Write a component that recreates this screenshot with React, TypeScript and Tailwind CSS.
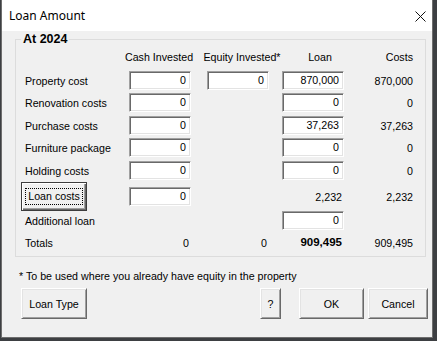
import type { ReactNode } from 'react'

interface Row {
  label: string
  cash?: string
  equity?: string
  loan?: string
  costs?: string
  h: string
}

const rows: Row[] = [
  { label: 'Property cost', cash: '0', equity: '0', loan: '870,000', costs: '870,000', h: 'h-[22px]' },
  { label: 'Renovation costs', cash: '0', loan: '0', costs: '0', h: 'h-[23px]' },
  { label: 'Purchase costs', cash: '0', loan: '37,263', costs: '37,263', h: 'h-[22px]' },
  { label: 'Furniture package', cash: '0', loan: '0', costs: '0', h: 'h-[23px]' },
  { label: 'Holding costs', cash: '0', loan: '0', costs: '0', h: 'h-[23px]' },
]

function TextBox({ value }: { value: string }) {
  return (
    <div className="w-[62px] h-[19px] bg-white border border-t-[#a0a0a0] border-l-[#a0a0a0] border-r-[#ffffff] border-b-[#ffffff] shadow-[inset_1px_1px_0_#696969,inset_-1px_-1px_0_#e3e3e3] flex items-center justify-end pr-[4px] leading-none">
      {value}
    </div>
  )
}

function Button({ children, w, focused }: { children: ReactNode; w: string; focused?: boolean }) {
  return (
    <div
      className={`${w} h-[31px] bg-[#f0f0f0] flex items-center justify-center border ${
        focused
          ? 'border-[#3c3c3c] shadow-[inset_1px_1px_0_#ffffff,inset_-1px_-1px_0_#696969,inset_-2px_-2px_0_#a0a0a0]'
          : 'border-t-[#ffffff] border-l-[#ffffff] border-r-[#696969] border-b-[#696969] shadow-[inset_1px_1px_0_#e3e3e3,inset_-1px_-1px_0_#a0a0a0]'
      }`}
    >
      {focused ? (
        <span className="border border-dotted border-black px-[2px] leading-[15px]">{children}</span>
      ) : (
        children
      )}
    </div>
  )
}

export default function App() {
  return (
    <div className="w-[437px] h-[341px] bg-[#3d3f42] overflow-hidden font-['Liberation_Sans',Arial,sans-serif] text-[10.67px] text-black whitespace-nowrap">
      <div className="ml-[1px] w-[432px] h-[338px] border border-t-0 border-[#6e6e6e] bg-[#f0f0f0] flex flex-col">
        {/* title bar */}
        <div className="h-[31px] bg-white flex items-center justify-between pl-[7px] pr-[6px]">
          <span className="font-['Noto_Sans',sans-serif] text-[12px] text-black">Loan Amount</span>
          <svg width="11" height="11" viewBox="0 0 11 11" className="mt-[1px]">
            <path d="M0.5 0.5 L10.5 10.5 M10.5 0.5 L0.5 10.5" stroke="#111" strokeWidth="1" />
          </svg>
        </div>

        <fieldset className="ml-[13px] w-[411px] border border-[#dcdcdc] pl-[5px] pb-[2px]">
          <legend className="ml-0 px-[2px] font-bold text-[12.5px] leading-[16px]">At 2024</legend>

          {/* column headers */}
          <div className="flex h-[14px] items-center mt-[3px]">
            <div className="w-[104px]" />
            <div className="w-[68px] text-center">Cash Invested</div>
            <div className="w-[10px]" />
            <div className="w-[78px] text-center">Equity Invested*</div>
            <div className="w-[78px] text-center">Loan</div>
            <div className="w-[54px] text-right">Costs</div>
          </div>

          <div className="mt-[5px] flex flex-col">
            {rows.map((r) => (
              <div key={r.label} className={`flex items-start pt-[2px] ${r.h}`}>
                <div className="w-[108px] pl-[4px] h-[19px] flex items-center">{r.label}</div>
                <TextBox value={r.cash ?? ''} />
                <div className="w-[16px]" />
                <div className="w-[62px]">{r.equity !== undefined && <TextBox value={r.equity} />}</div>
                <div className="w-[13px]" />
                <TextBox value={r.loan ?? ''} />
                <div className="w-[69px] h-[19px] flex items-center justify-end">{r.costs}</div>
              </div>
            ))}

            {/* loan costs */}
            <div className="flex items-center h-[29px]">
              <div className="w-[108px]">
                <Button w="w-[66px] !h-[29px]" focused>
                  Loan costs
                </Button>
              </div>
              <TextBox value="0" />
              <div className="w-[16px]" />
              <div className="w-[62px]" />
              <div className="w-[13px]" />
              <div className="w-[62px] text-right pr-[2px]">2,232</div>
              <div className="w-[69px] text-right">2,232</div>
            </div>

            {/* additional loan */}
            <div className="flex items-start h-[21px]">
              <div className="w-[108px] pl-[4px] h-[19px] flex items-center">Additional loan</div>
              <div className="w-[62px]" />
              <div className="w-[16px]" />
              <div className="w-[62px]" />
              <div className="w-[13px]" />
              <TextBox value="0" />
            </div>

            {/* totals */}
            <div className="flex items-center h-[22px]">
              <div className="w-[108px] pl-[4px]">Totals</div>
              <div className="w-[62px] text-right pr-[2px]">0</div>
              <div className="w-[16px]" />
              <div className="w-[62px] text-right pr-[2px]">0</div>
              <div className="w-[13px]" />
              <div className="w-[62px] text-right pr-[2px] font-bold text-[11.5px]">909,495</div>
              <div className="w-[69px] text-right">909,495</div>
            </div>
          </div>
        </fieldset>

        <div className="pl-[17px] mt-[12px] h-[14px] leading-[14px]">
          * To be used where you already have equity in the property
        </div>

        <div className="flex items-center mt-[5px] pl-[19px]">
          <Button w="w-[66px]">Loan Type</Button>
          <div className="flex-1" />
          <Button w="w-[21px]">?</Button>
          <div className="w-[18px]" />
          <Button w="w-[65px]">OK</Button>
          <div className="w-[4px]" />
          <Button w="w-[60px]">Cancel</Button>
          <div className="w-[4px]" />
        </div>
      </div>
    </div>
  )
}
